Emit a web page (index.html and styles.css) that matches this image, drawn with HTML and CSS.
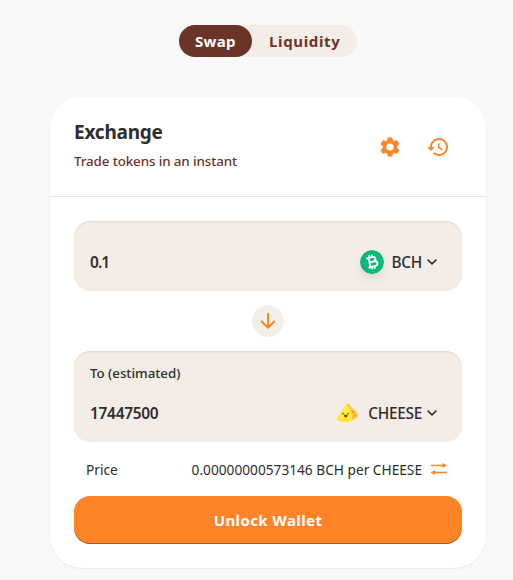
FILE: index.html
```html
<!DOCTYPE html>
<html lang="en">
<head>
<meta charset="utf-8">
<title>Exchange</title>
<link rel="stylesheet" href="styles.css">
</head>
<body>
<nav class="tabs"><a class="tab active">Swap</a><a class="tab">Liquidity</a></nav>
<main class="card">
  <header class="head">
    <div class="titles"><h1>Exchange</h1><p>Trade tokens in an instant</p></div>
    <div class="tools">
      <svg class="icon" viewBox="0 0 24 24"><path d="M19.14 12.94c.04-.3.06-.61.06-.94s-.02-.64-.07-.94l2.03-1.58a.49.49 0 0 0 .12-.61l-1.92-3.32a.49.49 0 0 0-.59-.22l-2.39.96a7 7 0 0 0-1.62-.94l-.36-2.54a.48.48 0 0 0-.48-.41h-3.84a.47.47 0 0 0-.47.41l-.36 2.54c-.59.24-1.13.57-1.62.94l-2.39-.96a.48.48 0 0 0-.59.22L2.74 8.87a.47.47 0 0 0 .12.61l2.03 1.58a6 6 0 0 0 0 1.88l-2.03 1.58a.49.49 0 0 0-.12.61l1.92 3.32c.12.22.37.29.59.22l2.39-.96c.5.38 1.03.7 1.62.94l.36 2.54c.05.24.24.41.48.41h3.84c.24 0 .44-.17.47-.41l.36-2.54a7 7 0 0 0 1.62-.94l2.39.96c.22.08.47 0 .59-.22l1.92-3.32a.47.47 0 0 0-.12-.61zM12 15.6a3.6 3.6 0 1 1 0-7.2 3.6 3.6 0 0 1 0 7.2z"/></svg>
      <svg class="icon" viewBox="0 0 24 24"><path d="M13.26 3C8.17 2.86 4 6.95 4 12H2.21c-.45 0-.67.54-.35.85l2.79 2.8c.2.2.51.2.71 0l2.79-2.8A.5.5 0 0 0 7.79 12H6c0-3.9 3.18-7.05 7.1-7 3.72.05 6.85 3.18 6.9 6.9.05 3.91-3.1 7.1-7 7.1-1.61 0-3.1-.55-4.28-1.48a.99.99 0 0 0-1.32.08c-.42.42-.39 1.13.08 1.49A8.86 8.86 0 0 0 13 21c5.05 0 9.14-4.17 9-9.26-.13-4.69-4.05-8.61-8.74-8.74zm-.51 5c-.41 0-.75.34-.75.75v3.68c0 .35.19.68.49.86l3.12 1.85a.75.75 0 0 0 .77-1.29l-2.88-1.71v-3.4a.74.74 0 0 0-.75-.74z"/></svg>
    </div>
  </header>
  <section class="body">
    <div class="field from">
      <div class="row"><span class="amount short">0.1</span>
        <span class="token"><svg class="coin bch" viewBox="0 0 24 24"><circle cx="12" cy="12" r="12" fill="#07b87a"/><g transform="rotate(-14 12 12)" fill="none" stroke="#fff" stroke-width="1.9"><path d="M7.2 7.300h6.200c3.700 0 3.700 4.600 0 4.600H10M9.500 7.300v9.400M7.200 16.700h6.700c4.200 0 4.200-4.800 0-4.800"/><path d="M10.700 4.700v2.600M13.400 4.700v2.600M10.700 16.700v2.600M13.400 16.700v2.600" stroke-width="1.500"/></g></svg><span class="name">BCH</span><svg class="chev" viewBox="0 0 10 6"><path d="M1 1l4 3.800L9 1"/></svg></span></div>
    </div>
    <div class="switch"><svg viewBox="0 0 24 24"><path d="M12 5v13.500M5.700 12.500l6.300 6.300 6.300-6.300"/></svg></div>
    <div class="field to">
      <div class="label">To (estimated)</div>
      <div class="row"><span class="amount">17447500</span>
        <span class="token"><svg class="coin" viewBox="0 0 24 24"><path d="M10.500 3.200L1.500 16.500Q.8 18.700 3 19.700Q9 22.300 15 20L20 15 12 3z" fill="#fbe52d"/><path d="M10.500 3.200Q12 2.200 13.500 4L22 13.300Q22.800 14.500 21.500 15.700L16 19.500Q15.500 12 10.500 3.200z" fill="#fdc343"/><path d="M10.500 3.200Q14 8 15.300 13L16 19Q9 17 3 18Q7 10 10.500 3.200z" fill="#ffed38"/><circle cx="17.500" cy="11" r="1.400" fill="#f5a02c"/><circle cx="19" cy="14.800" r="1" fill="#f5a02c"/><circle cx="7" cy="12.800" r=".8" fill="#4a3510"/><circle cx="12.300" cy="12.800" r=".8" fill="#4a3510"/><path d="M8 13.700h3.600q0 2.700-1.800 2.700T8 13.700" fill="#7b3e10"/></svg><span class="name">CHEESE</span><svg class="chev" viewBox="0 0 10 6"><path d="M1 1l4 3.800L9 1"/></svg></span></div>
    </div>
    <div class="price"><span>Price</span><span class="rate"><span>0.00000000573146 BCH per CHEESE</span><svg class="swapicon" viewBox="0 0 18 12"><path class="line" d="M1 2.500h13M4 9.500h13"/><path class="tips" d="M12.500 0l4.500 2.500L12.500 5zM5 7L.5 9.500 5 12z"/></svg></span></div>
    <button class="unlock">Unlock Wallet</button>
  </section>
</main>
</body>
</html>
```
FILE: styles.css
```css
* { box-sizing: border-box; margin: 0; padding: 0; }
body { width: 513px; height: 580px; overflow: hidden; background: #f8f8f8; color: #2e2e2e; font-family: "Noto Sans", sans-serif; font-size: 13.7px; }
.tabs { display: flex; width: 178px; height: 32px; margin: 25px 0 0 179px; border-radius: 16px; background: #f3ece7; }
.tab { height: 32px; padding: 0 0 0 17px; line-height: 33px; border-radius: 16px; font-size: 15px; font-weight: 700; letter-spacing: .65px; color: #6b3429; }
.tab.active { width: 73px; padding-left: 16px; letter-spacing: .3px; background: #6b3429; color: #fff; }
.card { width: 436px; height: 471px; margin: 40px 0 0 50px; border-radius: 32px; background: #fff; box-shadow: 0 2px 12px -8px rgba(25,19,38,.1), 0 1px 1px rgba(25,19,38,.05); }
.head { display: flex; justify-content: space-between; height: 100px; padding: 24px 36px 0 24px; border-bottom: 1px solid #e5e5e5; }
h1 { font-size: 19px; line-height: 23px; font-weight: 700; letter-spacing: -.22px; }
.head p { margin-top: 7px; font-size: 13.4px; line-height: 21px; letter-spacing: -.04px; font-weight: 500; letter-spacing: -.12px; color: #6b3429; }
.tools { display: flex; gap: 24px; padding-top: 14px; }
.icon { width: 24px; height: 24px; fill: #ff8427; }
.body { padding: 24px; }
.field { border-radius: 16px; background: #f3ece7; padding: 0 25px 0 16px; box-shadow: inset 0 2px 2px -1px rgba(74,74,104,.15); }
.from { height: 70px; padding-top: 29px; }
.to { height: 91px; padding-top: 12px; }
.label { height: 38px; font-size: 13.3px; line-height: 20px; font-weight: 500; }
.row { display: flex; justify-content: space-between; align-items: center; height: 24px; font-size: 15.4px; }
.amount { font-weight: 600; letter-spacing: -.25px; }
.short { letter-spacing: -.9px; }
.token { display: flex; align-items: center; }
.name { font-weight: 500; letter-spacing: -.3px; }
.coin { width: 24px; height: 24px; margin-right: 8px; }
.bch { border-radius: 50%; box-shadow: 0 6px 10px rgba(0,0,0,.075); }
.chev { width: 10px; height: 6px; margin-left: 5px; fill: none; stroke: #2e2e2e; stroke-width: 1.7; stroke-linecap: round; stroke-linejoin: round; }
.switch { display: grid; place-items: center; width: 32px; height: 32px; margin: 14px auto; border-radius: 50%; background: #f3f0ec; }
.switch svg { width: 24px; height: 24px; fill: none; stroke: #ff8427; stroke-width: 2; stroke-linecap: round; stroke-linejoin: round; }
.price { display: flex; justify-content: space-between; align-items: center; height: 54px; padding: 0 14px 0 12px; }
.rate { display: flex; align-items: center; gap: 8px; }
.swapicon { width: 18px; height: 12px; }
.line { stroke: #ff8427; stroke-width: 1.5; }
.tips { fill: #ff8427; }
.unlock { display: block; width: 100%; height: 48px; border: 0; border-radius: 16px; background: #ff8427; box-shadow: inset 0 -1px 0 rgba(14,14,44,.4); color: #fff; font: 700 15px "Noto Sans", sans-serif; letter-spacing: .4px; }
```
